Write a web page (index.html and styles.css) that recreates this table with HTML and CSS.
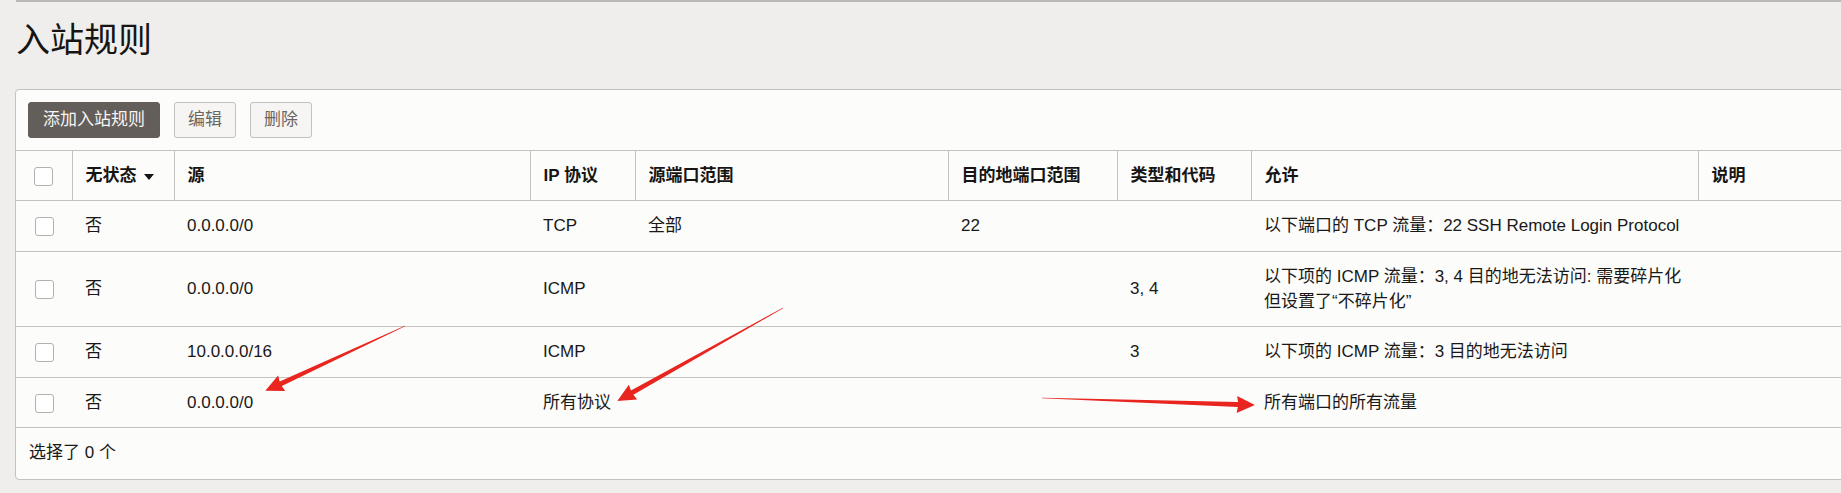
FILE: index.html
```html
<!DOCTYPE html>
<html lang="zh-CN">
<head>
  <meta charset="UTF-8">
  <meta name="viewport" content="width=device-width, initial-scale=1.0">
  <title>入站规则</title>

  <!-- Styles -->
  <link rel="stylesheet" href="styles.css">
</head>
<body>
  <div class="page">
    <h1 class="title">入站规则</h1>

    <div class="panel">
      <div class="toolbar">
        <button class="btn btn-primary" type="button">添加入站规则</button>
        <button class="btn" type="button">编辑</button>
        <button class="btn" type="button">删除</button>
      </div>

      <table class="rules">
        <colgroup>
          <col class="col-check">
          <col class="col-state">
          <col class="col-source">
          <col class="col-proto">
          <col class="col-sport">
          <col class="col-dport">
          <col class="col-type">
          <col class="col-allow">
          <col>
        </colgroup>
        <thead>
          <tr>
            <th class="cell-check"><span class="checkbox"></span></th>
            <th>无状态<span class="sort-down"></span></th>
            <th>源</th>
            <th>IP 协议</th>
            <th>源端口范围</th>
            <th>目的地端口范围</th>
            <th>类型和代码</th>
            <th>允许</th>
            <th>说明</th>
          </tr>
        </thead>
        <tbody>
          <tr>
            <td class="cell-check"><span class="checkbox"></span></td>
            <td>否</td>
            <td>0.0.0.0/0</td>
            <td>TCP</td>
            <td>全部</td>
            <td>22</td>
            <td></td>
            <td>以下端口的 TCP 流量：22 SSH Remote Login Protocol</td>
            <td></td>
          </tr>
          <tr>
            <td class="cell-check"><span class="checkbox"></span></td>
            <td>否</td>
            <td>0.0.0.0/0</td>
            <td>ICMP</td>
            <td></td>
            <td></td>
            <td>3, 4</td>
            <td>以下项的 ICMP 流量：3, 4 目的地无法访问: 需要碎片化<br>但设置了“不碎片化”</td>
            <td></td>
          </tr>
          <tr>
            <td class="cell-check"><span class="checkbox"></span></td>
            <td>否</td>
            <td>10.0.0.0/16</td>
            <td>ICMP</td>
            <td></td>
            <td></td>
            <td>3</td>
            <td>以下项的 ICMP 流量：3 目的地无法访问</td>
            <td></td>
          </tr>
          <tr>
            <td class="cell-check"><span class="checkbox"></span></td>
            <td>否</td>
            <td>0.0.0.0/0</td>
            <td>所有协议</td>
            <td></td>
            <td></td>
            <td></td>
            <td>所有端口的所有流量</td>
            <td></td>
          </tr>
        </tbody>
      </table>

      <div class="footer">选择了 0 个</div>
    </div>
  </div>

  <!-- Annotation arrows drawn over the screenshot -->
  <svg class="arrows" width="1841" height="493" viewBox="0 0 1841 493">
    <polygon transform="translate(405 326) rotate(155.1)" points="0,-0.3 137,-2.5 136,-8.5 154,0 136,8.5 137,2.5 0,0.3"></polygon>
    <polygon transform="translate(783 308) rotate(150.7)" points="0,-0.3 173,-2.5 172,-8.5 190,0 172,8.5 173,2.5 0,0.3"></polygon>
    <polygon transform="translate(1042 398) rotate(1.9)" points="0,-0.3 196,-2.5 195,-8.5 213,0 195,8.5 196,2.5 0,0.3"></polygon>
  </svg>
</body>
</html>
```

FILE: styles.css
```css
* {
  box-sizing: border-box;
}

body {
  margin: 0;
  position: relative;
  overflow: hidden;
  background: #efeeec;
  color: #1a1816;
  font-family: "Liberation Sans", "Noto Sans CJK SC", sans-serif;
  font-size: 17px;
}

.page {
  margin-left: 16px;
  border-top: 2px solid #bab8b5;
}

.title {
  margin: 0 0 29px;
  padding-top: 18px;
  font-size: 34px;
  font-weight: normal;
  line-height: 40px;
  color: #161513;
}

/* Panel */
.panel {
  margin-left: -1px;
  margin-right: -20px;
  background: #fcfcfb;
  border: 1px solid #c4c2bf;
  border-radius: 4px 0 0 4px;
}

.toolbar {
  display: flex;
  gap: 14px;
  padding: 12px;
}

.btn {
  height: 36px;
  padding: 0 13px;
  border: 1px solid #c3c1be;
  border-radius: 3px;
  background: #f6f5f3;
  color: #6b6764;
  font-family: inherit;
  font-size: 17px;
  line-height: 34px;
}

.btn-primary {
  padding: 0 14px;
  border-color: #645e5a;
  background: #645e5a;
  color: #f7f5f3;
}

/* Table */
.rules {
  width: 100%;
  table-layout: fixed;
  border-collapse: collapse;
}

.col-check { width: 56px; }
.col-state { width: 102px; }
.col-source { width: 356px; }
.col-proto { width: 105px; }
.col-sport { width: 313px; }
.col-dport { width: 169px; }
.col-type { width: 134px; }
.col-allow { width: 447px; }

.rules th,
.rules td {
  padding: 12px 13px;
  line-height: 25px;
  text-align: left;
  vertical-align: middle;
  border-bottom: 1px solid #c4c2bf;
}

.rules td {
  padding-bottom: 12.5px;
}

.rules th {
  border-top: 1px solid #c4c2bf;
  border-left: 1px solid #c4c2bf;
  font-weight: bold;
  color: #161513;
}

.rules th:first-child {
  border-left: none;
}

.rules .cell-check {
  padding: 0;
  text-align: center;
}

.checkbox {
  display: inline-block;
  width: 19px;
  height: 19px;
  vertical-align: middle;
  border: 1px solid #b3b1ae;
  border-radius: 3px;
  background: #ffffff;
}

.sort-down {
  display: inline-block;
  margin-left: 7px;
  vertical-align: middle;
  border-left: 5px solid transparent;
  border-right: 5px solid transparent;
  border-top: 6px solid #161513;
}

.footer {
  padding: 12px 13px 13px;
  line-height: 26px;
}

/* Arrows */
.arrows {
  position: absolute;
  top: 0;
  left: 0;
  pointer-events: none;
}

.arrows polygon {
  fill: #e8261f;
}
```
